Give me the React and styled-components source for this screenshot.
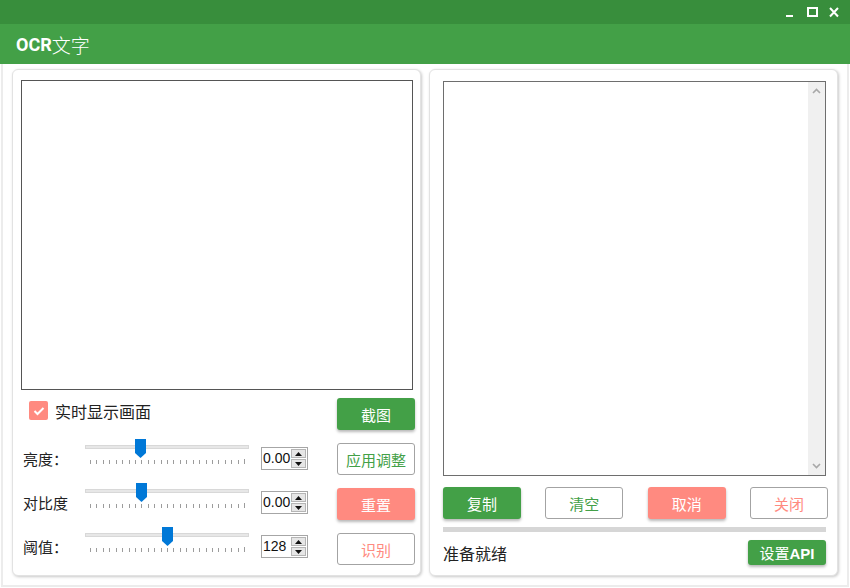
import React from 'react';
import styled, { createGlobalStyle } from 'styled-components';

const GlobalStyle = createGlobalStyle`
  html, body {
    margin: 0;
    padding: 0;
    background: #ffffff;
  }
  body {
    font-family: "Noto Sans CJK SC", "Noto Sans", sans-serif;
    color: #222;
  }
`;

const GREEN = '#43a047';
const SALMON = '#ff8a80';

const Window = styled.div`
  width: 850px;
  height: 588px;
  display: flex;
  flex-direction: column;
  background: #fff;
  overflow: hidden;
`;

const TitleBar = styled.div`
  height: 24px;
  background: #388e3c;
  display: flex;
  justify-content: flex-end;
  align-items: center;
  padding-right: 10px;
  gap: 10px;
`;

const WinButton = styled.svg`
  width: 12px;
  height: 12px;
  display: block;
`;

const Header = styled.div`
  height: 40px;
  background: ${GREEN};
  display: flex;
  align-items: center;
  padding-left: 16px;
  color: #fff;
`;

const Brand = styled.span`
  font-family: Roboto, "Liberation Sans", sans-serif;
  font-weight: 700;
  font-size: 18px;
`;

const BrandCn = styled.span`
  font-family: "Noto Sans CJK SC", sans-serif;
  font-size: 19px;
  font-weight: 300;
`;

const Body = styled.div`
  flex: 1;
  margin: 0 1px 1px;
  border: 2px solid #ececec;
  border-top: 0;
  padding: 5px 9px 9px;
  display: flex;
  gap: 8px;
`;

const Panel = styled.div`
  box-sizing: border-box;
  width: 409px;
  background: #fff;
  border: 1px solid #e2e2e2;
  border-radius: 6px;
  box-shadow: 1px 1px 3px rgba(0, 0, 0, 0.22);
  padding: ${p => p.$pad};
  display: flex;
  flex-direction: column;
`;

const ImageBox = styled.div`
  width: 392px;
  height: 310px;
  box-sizing: border-box;
  border: 1px solid #555;
  background: #fff;
`;

const Controls = styled.div`
  display: flex;
  justify-content: space-between;
  margin-top: 8px;
  margin-right: -2px;
`;

const LeftColumn = styled.div`
  display: flex;
  flex-direction: column;
  gap: 12px;
  padding-left: 2px;
`;

const CheckRow = styled.label`
  display: flex;
  align-items: flex-start;
  height: 26px;
  padding-top: 3px;
  padding-left: 6px;
  gap: 7px;
  font-size: 16px;
  line-height: 20px;
`;

const CheckBox = styled.span`
  width: 19px;
  height: 19px;
  border-radius: 2px;
  background: ${SALMON};
  display: flex;
  align-items: center;
  justify-content: center;
`;

const SliderRow = styled.div`
  display: flex;
  align-items: flex-start;
  height: 32px;
`;

const RowLabel = styled.span`
  width: 62px;
  margin-top: 10px;
  font-size: 15px;
  line-height: 20px;
`;

const SliderBox = styled.div`
  position: relative;
  width: 164px;
  height: 26px;
`;

const Track = styled.div`
  position: absolute;
  left: 0;
  right: 0;
  top: 6px;
  height: 4px;
  background: #e7e7e7;
  border: 1px solid #d8d8d8;
  box-sizing: border-box;
`;

const Ticks = styled.svg`
  position: absolute;
  left: 0;
  top: 20px;
`;

const Thumb = styled.svg`
  position: absolute;
  top: 0;
`;

const Spin = styled.div`
  margin-left: 12px;
  margin-top: 8px;
  width: 47px;
  height: 23px;
  box-sizing: border-box;
  border: 1px solid #a6a6a6;
  display: flex;
  background: #fff;
`;

const SpinValue = styled.span`
  flex: 1;
  font-family: "Liberation Sans", Arial, sans-serif;
  font-size: 14px;
  line-height: 21px;
  padding-left: 1px;
  color: #111;
`;

const SpinArrows = styled.div`
  width: 15px;
  display: flex;
  flex-direction: column;
  gap: 1px;
  padding: 1px 1px 1px 0;
`;

const SpinArrow = styled.div`
  flex: 1;
  background: #e6e6e6;
  border: 1px solid #b5b5b5;
  display: flex;
  align-items: center;
  justify-content: center;
`;

const ButtonColumn = styled.div`
  display: flex;
  flex-direction: column;
  gap: 13px;
`;

const Button = styled.button`
  width: 78px;
  height: ${p => (p.$small ? 25 : 32)}px;
  box-sizing: border-box;
  border-radius: 3px;
  font-family: "Noto Sans CJK SC", sans-serif;
  font-size: 15px;
  padding: 0;
  cursor: pointer;
  background: ${p => (p.$fill ? p.$color : '#fff')};
  color: ${p => (p.$fill ? '#fff' : p.$color)};
  border: ${p => (p.$fill ? '0' : '1px solid #a3a3a3')};
  box-shadow: ${p => (p.$fill ? '0 2px 3px rgba(0,0,0,0.28)' : 'none')};
`;

const ApiText = styled.span`
  font-family: "Liberation Sans", Arial, sans-serif;
  font-weight: 700;
`;

const TextArea = styled.div`
  height: 395px;
  box-sizing: border-box;
  border: 1px solid #6e6e6e;
  display: flex;
  justify-content: flex-end;
`;

const ScrollBar = styled.div`
  width: 17px;
  background: #f0f0f0;
  display: flex;
  flex-direction: column;
  justify-content: space-between;
  align-items: center;
  padding: 6px 0;
`;

const ButtonRow = styled.div`
  display: flex;
  justify-content: space-between;
  margin-top: 11px;
  margin-right: -2px;
`;

const Progress = styled.div`
  height: 5px;
  background: #d6d6d6;
  margin-top: 8px;
`;

const StatusRow = styled.div`
  display: flex;
  justify-content: space-between;
  align-items: center;
  margin-top: 8px;
`;

const StatusText = styled.span`
  font-size: 16px;
  color: #222;
`;

const Chevron = ({ up }) => (
  <svg width="9" height="6" viewBox="0 0 9 6">
    <polyline
      points={up ? '1,5 4.5,1.5 8,5' : '1,1 4.5,4.5 8,1'}
      fill="none"
      stroke="#a8a8a8"
      strokeWidth="1.6"
    />
  </svg>
);

const Slider = ({ fraction }) => {
  const ticks = [];
  for (let i = 0; i <= 24; i++) {
    const x = Math.round(5 + (154 * i) / 24) + 0.5;
    ticks.push(
      <line key={i} x1={x} x2={x} y1={i === 24 ? 0 : 1} y2="5" stroke="#9c9c9c" strokeWidth="1" />
    );
  }
  const center = 5 + fraction * 154;
  return (
    <SliderBox>
      <Track />
      <Ticks width="164" height="5">{ticks}</Ticks>
      <Thumb width="11" height="19" viewBox="0 0 11 19" style={{ left: center - 5.5 }}>
        <polygon points="0,0 11,0 11,14 5.5,19 0,14" fill="#0078d7" />
      </Thumb>
    </SliderBox>
  );
};

const SpinBox = ({ value }) => (
  <Spin>
    <SpinValue>{value}</SpinValue>
    <SpinArrows>
      <SpinArrow>
        <svg width="7" height="4"><polygon points="0,4 3.5,0 7,4" fill="#111" /></svg>
      </SpinArrow>
      <SpinArrow>
        <svg width="7" height="4"><polygon points="0,0 3.5,4 7,0" fill="#111" /></svg>
      </SpinArrow>
    </SpinArrows>
  </Spin>
);

const sliders = [
  { label: '亮度：', value: '0.00', fraction: 0.331 },
  { label: '对比度', value: '0.00', fraction: 0.333 },
  { label: '阈值：', value: '128', fraction: 0.5 },
];

export default function App() {
  return (
    <>
      <GlobalStyle />
      <Window>
        <TitleBar>
          <WinButton viewBox="0 0 12 12">
            <rect x="2" y="9" width="7" height="2" fill="#fff" />
          </WinButton>
          <WinButton viewBox="0 0 12 12">
            <rect x="2" y="2" width="9" height="8" fill="none" stroke="#fff" strokeWidth="2" />
          </WinButton>
          <WinButton viewBox="0 0 12 12">
            <path d="M2 2 L10 10.5 M10 2 L2 10.5" stroke="#fff" strokeWidth="2" />
          </WinButton>
        </TitleBar>
        <Header>
          <Brand>OCR</Brand>
          <BrandCn>文字</BrandCn>
        </Header>
        <Body>
          <Panel $pad="10px 7px 10px 8px">
            <ImageBox />
            <Controls>
              <LeftColumn>
                <CheckRow>
                  <CheckBox>
                    <svg width="12" height="10" viewBox="0 0 12 10">
                      <polyline points="1.5,5 4.5,8 10.5,2" fill="none" stroke="#fff" strokeWidth="2" />
                    </svg>
                  </CheckBox>
                  实时显示画面
                </CheckRow>
                {sliders.map(s => (
                  <SliderRow key={s.label}>
                    <RowLabel>{s.label}</RowLabel>
                    <Slider fraction={s.fraction} />
                    <SpinBox value={s.value} />
                  </SliderRow>
                ))}
              </LeftColumn>
              <ButtonColumn>
                <Button $fill $color={GREEN}>截图</Button>
                <Button $color={GREEN}>应用调整</Button>
                <Button $fill $color={SALMON}>重置</Button>
                <Button $color={SALMON}>识别</Button>
              </ButtonColumn>
            </Controls>
          </Panel>
          <Panel $pad="11px 11px 10px 13px">
            <TextArea>
              <ScrollBar>
                <Chevron up />
                <Chevron />
              </ScrollBar>
            </TextArea>
            <ButtonRow>
              <Button $fill $color={GREEN}>复制</Button>
              <Button $color={GREEN}>清空</Button>
              <Button $fill $color={SALMON}>取消</Button>
              <Button $color={SALMON}>关闭</Button>
            </ButtonRow>
            <Progress />
            <StatusRow>
              <StatusText>准备就绪</StatusText>
              <Button $fill $small $color={GREEN}>
                设置<ApiText>API</ApiText>
              </Button>
            </StatusRow>
          </Panel>
        </Body>
      </Window>
    </>
  );
}
